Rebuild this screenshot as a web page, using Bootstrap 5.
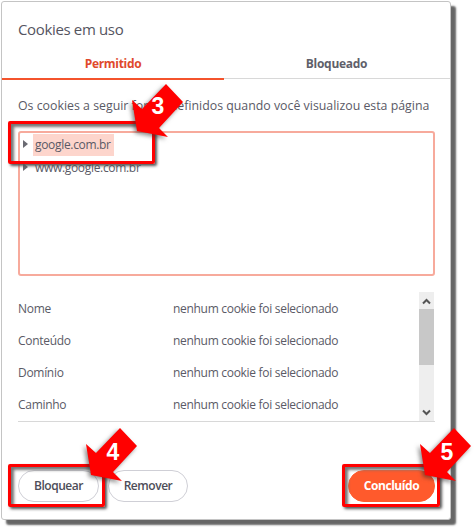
<!DOCTYPE html>
<html lang="pt"><head><meta charset="utf-8"><title>Cookies em uso</title>
<link href="https://cdn.jsdelivr.net/npm/bootstrap@5.3.0/dist/css/bootstrap.min.css" rel="stylesheet">
<style>
html,body{background:#fff;height:100%;overflow:hidden}
body{position:relative;font-family:"Open Sans","Noto Sans",sans-serif;font-size:12px;color:#5a5a66;width:474px;height:529px}
.dlg{position:absolute;left:1px;top:1px;width:450px;height:519px;background:#fff;border:1px solid #c4c4c4;border-radius:3px;box-shadow:5px 5px 2px #666}
.dlg-title{font-size:15px;letter-spacing:-.35px;color:#55555f;height:43px;padding:16px 0 0 16px;line-height:22px;margin:0;font-weight:400}
.tabs-bar{height:34px;border-bottom:1px solid #d8d8d8}
.tab-item{font-weight:700;font-size:12px;letter-spacing:-.3px;text-align:center;line-height:38px;width:225px;height:34px;color:#5f5f6a}
.tab-on{width:222px;color:#e0492c;border-bottom:2px solid #f4532c;height:35px}
.intro{padding:17px 16px 0;line-height:20px;height:52px;font-size:12.35px;white-space:nowrap}
.tree{margin:0 15px 0 16px;height:145px;border:2px solid #f7aa9c;border-radius:3px;padding:1px 0 0 0;font-size:12px}
.tree-row{height:22px;line-height:22px;display:flex;align-items:center;letter-spacing:-.32px}
.tree-row i{width:0;height:0;border-left:5px solid #6a6a72;border-top:4px solid transparent;border-bottom:4px solid transparent;margin:-3px 5px 0 3px}
.tree-sel{background:#fdd5cc;padding:0 2px;width:81px;white-space:nowrap}
.tree-row.mt{margin-top:1px}
.props{margin:16px 15px 0 16px;height:130px;border-bottom:1px solid #d8d8d8}
.prop-row{height:32px;line-height:32px;font-size:12px;letter-spacing:-.3px;padding-top:1px}
.prop-name{width:155px}
.sbar{width:15px;margin-right:1px;background:#eee;position:relative}
.sbar-thumb{position:absolute;left:0;right:0;top:17px;height:56px;background:#c8c8c8}
.sbar svg{position:absolute;left:3px;width:9px;height:7px}
.foot{padding:48px 15px 0 16px}
.pill{height:32px;font-size:12px;padding:0;border-radius:16px;border:1px solid #cfcfd6;color:#4d4d58;font-weight:600;letter-spacing:-.45px;background:#fff;line-height:30px}
.pill-a{width:81px}.pill-b{width:80px;margin-left:9px}
.pill-go{width:87px;background:#ff5a2c;border-color:#ff5a2c;color:#fff;font-weight:700}
.mark-box{position:absolute;border:3px solid #f00;border-radius:2px;box-shadow:2px 2px 3px #555,inset 3px 3px 3px #777;z-index:2}
.mb1{left:8px;top:121px;width:147px;height:43px}
.mb2{left:8px;top:464px;width:97px;height:43px}
.mb3{left:342px;top:464px;width:98px;height:43px}
.marks{position:absolute;left:0;top:0;z-index:3;overflow:visible}
.marks polygon{fill:#f00;filter:drop-shadow(-2px 2px 2px rgba(40,40,40,.55))}
.marks text{font-family:"Liberation Sans",Arial,sans-serif;font-weight:700;font-size:23px;fill:#fff;text-anchor:middle}
</style></head><body>
<div class="dlg">
  <h1 class="dlg-title">Cookies em uso</h1>
  <div class="tabs-bar d-flex"><div class="tab-item tab-on">Permitido</div><div class="tab-item">Bloqueado</div></div>
  <div class="intro">Os cookies a seguir foram definidos quando você visualizou esta página</div>
  <div class="tree">
    <div class="tree-row"><i></i><span class="tree-sel">google.com.br</span></div>
    <div class="tree-row mt"><i></i><span class="tree-sel bg-transparent">www.google.com.br</span></div>
  </div>
  <div class="props d-flex">
    <div class="flex-grow-1">
      <div class="prop-row d-flex"><div class="prop-name">Nome</div><div>nenhum cookie foi selecionado</div></div>
      <div class="prop-row d-flex"><div class="prop-name">Conteúdo</div><div>nenhum cookie foi selecionado</div></div>
      <div class="prop-row d-flex"><div class="prop-name">Domínio</div><div>nenhum cookie foi selecionado</div></div>
      <div class="prop-row d-flex"><div class="prop-name">Caminho</div><div>nenhum cookie foi selecionado</div></div>
    </div>
    <div class="sbar"><svg style="top:6px" viewBox="0 0 9 7"><path d="M1 5.5 4.5 2 8 5.5" fill="none" stroke="#555" stroke-width="2"/></svg><div class="sbar-thumb"></div><svg style="bottom:5px" viewBox="0 0 9 7"><path d="M1 1.5 4.5 5 8 1.5" fill="none" stroke="#555" stroke-width="2"/></svg></div>
  </div>
  <div class="foot d-flex">
    <button class="btn pill pill-a">Bloquear</button><button class="btn pill pill-b">Remover</button>
    <button class="btn pill pill-go ms-auto">Concluído</button>
  </div>
</div>
<div class="mark-box mb1"></div><div class="mark-box mb2"></div><div class="mark-box mb3"></div>
<svg class="marks" width="474" height="529" viewBox="0 0 474 529">
  <g><polygon points="166,84 183,102 159,128 168,137 137,131 132,100 142,109"/><text x="158" y="114">3</text></g>
  <g transform="translate(-46,344)"><polygon points="166,84 183,102 159,128 168,137 137,131 132,100 142,109"/><text x="159" y="116">4</text></g>
  <g transform="translate(288,344)"><polygon points="166,84 183,102 159,128 168,137 137,131 132,100 142,109"/><text x="159" y="116">5</text></g>
</svg>
</body></html>
